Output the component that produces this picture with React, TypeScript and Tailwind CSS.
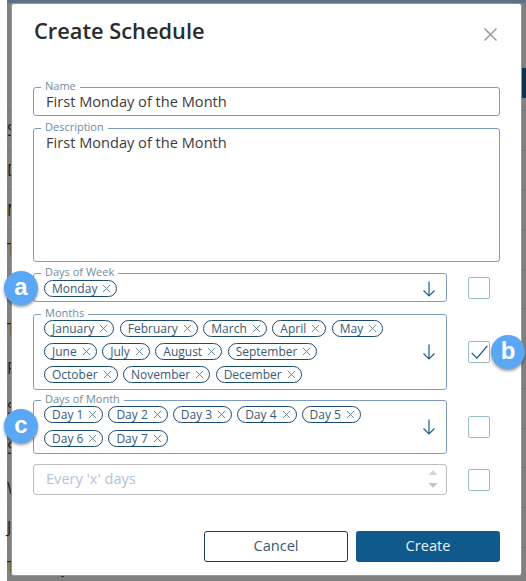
import { ReactNode } from 'react';

const font = { fontFamily: '"Open Sans", sans-serif' };

const bgRows = ['Sunday', 'Daily', 'Monthly', 'Tuesday', 'Thursday', 'Thursday', 'Friday', 'Saturday', 'Sunday', 'Wednesday', 'June', 'Tuesday'];

function CrossIcon({ className }: { className: string }) {
  return (
    <svg viewBox="0 0 10 10" className={className} fill="none" stroke="currentColor" strokeWidth="1">
      <path d="M1 1l8 8M9 1l-8 8" />
    </svg>
  );
}

function Chip({ label }: { label: string }) {
  return (
    <span className="flex h-[17px] items-center gap-[5px] rounded-full border border-[#1c4a6e] pl-[7px] pr-[5px] text-[12px] leading-none text-[#3a5a76]">
      {label}
      <CrossIcon className="h-[9px] w-[9px] text-[#5d7a92]" />
    </span>
  );
}

function ArrowDown({ className }: { className: string }) {
  return (
    <svg viewBox="0 0 14 16" className={`h-[16px] w-[14px] shrink-0 text-[#1f5f8f] ${className}`} fill="none" stroke="currentColor" strokeWidth="1.2">
      <path d="M7 0.5v14.5M1.5 9.5L7 15l5.5-5.5" />
    </svg>
  );
}

function Field({ label, className, children }: { label: string; className: string; children: ReactNode }) {
  return (
    <fieldset className={`rounded-[3px] border border-[#7d9bbd] pl-[10px] ${className}`}>
      <legend className="ml-[-3px] px-[4px] text-[11px] leading-[12px] text-[#6f8b9f]">
        <span className="block -translate-y-px">{label}</span>
      </legend>
      {children}
    </fieldset>
  );
}

function Checkbox({ checked }: { checked?: boolean }) {
  return (
    <span className="relative flex h-[22px] w-[22px] items-center justify-center rounded-[2px] border border-[#9dbccb]">
      {checked && (
        <svg viewBox="0 0 20 16" className="h-[14px] w-[19px] text-[#1c4f78]" fill="none" stroke="currentColor" strokeWidth="1.4">
          <path d="M1 9l6 6L19 1" />
        </svg>
      )}
    </span>
  );
}

function Badge({ letter, className }: { letter: string; className: string }) {
  return (
    <span
      className={`absolute flex h-[34px] w-[34px] items-center justify-center rounded-full bg-[#5aa7f5] pb-[2px] text-[24px] font-bold leading-none text-white shadow-[0_2px_3px_rgba(0,0,0,0.4)] ${className}`}
      style={{ fontFamily: '"Liberation Sans", sans-serif' }}
    >
      {letter}
    </span>
  );
}

export default function App() {
  return (
    <div className="relative h-[581px] w-[526px] overflow-hidden bg-white" style={font}>
      <div className="ml-[7px] h-full bg-[#808080]">
        <div className="h-[3px] bg-[#5b7186]" />
        <div className="ml-auto mt-[65px] h-[30px] w-[30px] bg-[#0d3350]" />
        <div className="mt-[12px]">
          {bgRows.map((row, i) => (
            <div key={i} className="flex h-[39.7px] items-center border-t border-[#757575] text-[16px] text-[#222]">
              {row}
            </div>
          ))}
        </div>
      </div>

      <div className="absolute left-[11px] top-[3px] flex h-[573px] w-[511px] flex-col rounded-[3px] border border-[#7f9cc4] bg-white pl-[21px] pr-[21px] text-[#333]">
        <div className="mt-[12px] flex items-center justify-between">
          <h1 className="ml-[1px] text-[21.8px] font-semibold leading-[30px] text-[#2b2b2b]">Create Schedule</h1>
          <CrossIcon className="mr-[2px] mt-[6px] h-[15px] w-[15px] text-[#9a9a9a]" />
        </div>

        <Field label="Name" className="mt-[35px] h-[35px]">
          <div className="pl-[2px] text-[14.6px] leading-[17px] text-[#3c3c3c]">First Monday of the Month</div>
        </Field>
        <Field label="Description" className="mt-[6px] h-[140px]">
          <div className="pl-[2px] text-[14.6px] leading-[17px] text-[#3c3c3c]">First Monday of the Month</div>
        </Field>

        <div className="mt-[5px] flex items-end justify-between pr-[10px]">
          <Field label="Days of Week" className="flex h-[35px] w-[414px] items-start justify-between pr-[10px] pt-[1px]">
            <Chip label="Monday" />
            <ArrowDown className="mt-[1px]" />
          </Field>
          <span className="mb-[3px]"><Checkbox /></span>
        </div>

        <div className="mt-[6px] flex items-center justify-between pr-[10px]">
          <Field label="Months" className="flex h-[82px] w-[414px] items-center justify-between pr-[10px]">
            <div className="flex w-[345px] flex-wrap content-start gap-x-[5.5px] gap-y-[6px] self-start">
              {['January', 'February', 'March', 'April', 'May', 'June', 'July', 'August', 'September', 'October', 'November', 'December'].map((m) => (
                <Chip key={m} label={m} />
              ))}
            </div>
            <ArrowDown className="mb-[6px]" />
          </Field>
          <span className="mt-[6px]"><Checkbox checked /></span>
        </div>

        <div className="mt-[4px] flex items-center justify-between pr-[10px]">
          <Field label="Days of Month" className="flex h-[60px] w-[414px] items-center justify-between pr-[10px]">
            <div className="flex w-[330px] flex-wrap content-start gap-x-[5px] gap-y-[7px] self-start">
              {['Day 1', 'Day 2', 'Day 3', 'Day 4', 'Day 5', 'Day 6', 'Day 7'].map((d) => (
                <Chip key={d} label={d} />
              ))}
            </div>
            <ArrowDown className="mb-[6px]" />
          </Field>
          <span className="mt-[6px]"><Checkbox /></span>
        </div>

        <div className="mt-[10px] flex items-center justify-between pr-[10px]">
          <div className="flex h-[31px] w-[414px] items-center justify-between rounded-[3px] border border-[#bdbdbd] pb-[2px] pl-[12px] pr-[8px] text-[14.6px] text-[#b4c3d8]">
            Every 'x' days
            <svg viewBox="0 0 10 20" className="h-[20px] w-[10px]">
              <path d="M5 1l4.5 5h-9z" fill="#d4d4d4" />
              <path d="M5 19l-4.5-5h9z" fill="#c4c4c4" />
            </svg>
          </div>
          <Checkbox />
        </div>

        <div className="mt-[36px] flex justify-end gap-[8px] text-[14.6px]">
          <button className="h-[31px] w-[144px] rounded-[3px] border border-[#14405f] bg-white pb-[2px] text-[#3a5a76]">Cancel</button>
          <button className="h-[31px] w-[144px] rounded-[3px] bg-[#0f5a8a] pb-[2px] text-[#e8f0f6]">Create</button>
        </div>
      </div>

      <Badge letter="a" className="left-[4px] top-[271px]" />
      <Badge letter="b" className="left-[491px] top-[335px]" />
      <Badge letter="c" className="left-[4px] top-[409px]" />
    </div>
  );
}
